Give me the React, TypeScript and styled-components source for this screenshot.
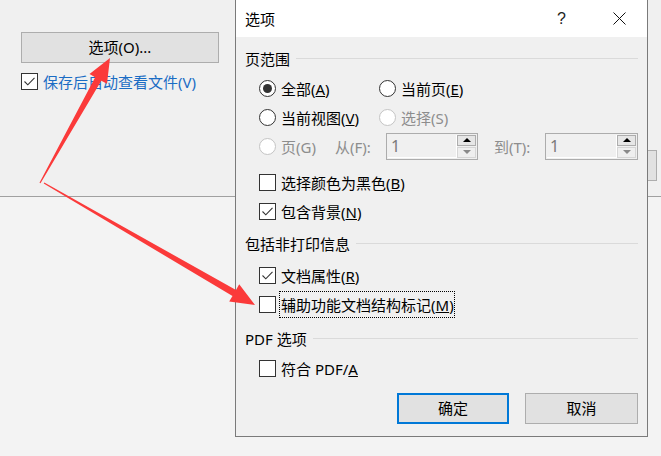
import React from "react";
import styled, { createGlobalStyle } from "styled-components";

const GlobalStyle = createGlobalStyle`
  html, body {
    margin: 0;
    padding: 0;
    background: #f0f0f0;
  }
  body {
    font-family: "Noto Sans", "Noto Sans CJK SC", sans-serif;
    font-size: 15px;
    color: #000;
  }
`;

const Page = styled.div`
  position: relative;
  width: 661px;
  height: 456px;
  overflow: hidden;
  display: flex;
  flex-direction: column;
  background: #f0f0f0;
`;

const BgTop = styled.div`
  height: 164px;
  padding: 32px 4px 0 21px;
  display: flex;
  border-bottom: 1px solid #a0a0a0;
`;

const BgColumn = styled.div`
  display: flex;
  flex-direction: column;
  gap: 10px;
`;

const BgBottom = styled.div`
  flex: 1;
  background: #f3f3f3;
`;

const WinButton = styled.button<{ $w: number; $primary?: boolean }>`
  box-sizing: border-box;
  width: ${({ $w }) => $w}px;
  height: 31px;
  background: #e1e1e1;
  border: ${({ $primary }) => ($primary ? "2px solid #0078d7" : "1px solid #adadad")};
  font-family: inherit;
  font-size: 15px;
  color: #000;
  padding: 0;
  line-height: 1;
`;

const Stub = styled.div`
  margin-left: auto;
  margin-top: 118px;
  width: 17px;
  height: 31px;
  box-sizing: border-box;
  background: #e1e1e1;
  border: 1px solid #adadad;
`;

const LinkCheck = styled.label`
  display: flex;
  align-items: center;
  gap: 5px;
  color: #1a6cc4;
  height: 17px;
`;

const Dialog = styled.div`
  position: absolute;
  left: 235px;
  top: 0;
  width: 413px;
  height: 437px;
  box-sizing: border-box;
  border: 1px solid #7a7a7a;
  border-top: none;
  background: #f0f0f0;
  display: flex;
  flex-direction: column;
`;

const TitleBar = styled.div`
  height: 37px;
  background: #fff;
  display: flex;
  align-items: center;
  padding: 0 21px 0 9px;
`;

const Title = styled.span`
  flex: 1;
  font-size: 15px;
`;

const Help = styled.span`
  font-family: "Liberation Sans", sans-serif;
  font-size: 16px;
  margin-right: 47px;
  color: #222;
`;

const Body = styled.div`
  padding: 11px 9px 12px 9px;
  display: flex;
  flex-direction: column;
  flex: 1;
`;

const SectionHead = styled.div<{ $mt?: number }>`
  display: flex;
  align-items: center;
  height: 20px;
  gap: 6px;
  margin-top: ${({ $mt }) => $mt ?? 0}px;
  &::after {
    content: "";
    flex: 1;
    height: 1px;
    background: #dadada;
  }
`;

const Group = styled.div<{ $mt: number }>`
  display: flex;
  flex-direction: column;
  gap: 5px;
  margin-top: ${({ $mt }) => $mt}px;
  padding-left: 14px;
`;

const Row = styled.div`
  display: flex;
  align-items: center;
  height: 24px;
`;

const Opt = styled.label<{ $w?: number; $disabled?: boolean }>`
  display: flex;
  align-items: center;
  gap: 5px;
  width: ${({ $w }) => ($w ? `${$w}px` : "auto")};
  color: ${({ $disabled }) => ($disabled ? "#8d8d8d" : "#000")};
  white-space: nowrap;
`;

const Radio = styled.span<{ $checked?: boolean; $disabled?: boolean }>`
  box-sizing: border-box;
  width: 17px;
  height: 17px;
  border-radius: 50%;
  border: 1px solid ${({ $disabled }) => ($disabled ? "#c4c4c4" : "#333")};
  background: #fff;
  display: flex;
  align-items: center;
  justify-content: center;
  flex-shrink: 0;
  &::after {
    content: "";
    width: 9px;
    height: 9px;
    border-radius: 50%;
    background: #333;
    display: ${({ $checked }) => ($checked ? "block" : "none")};
  }
`;

const Box = styled.span`
  box-sizing: border-box;
  width: 17px;
  height: 17px;
  border: 1px solid #333;
  background: #fff;
  display: flex;
  align-items: center;
  justify-content: center;
  flex-shrink: 0;
`;

const Focus = styled.span`
  outline: 1px dotted #000;
  outline-offset: 0;
  padding: 2px 0 2px 1px;
  margin-left: -1px;
`;

const SpinLabel = styled.span`
  color: #8d8d8d;
  margin-left: 20px;
  width: 51px;
`;

const Spin = styled.div<{ $w: number }>`
  box-sizing: border-box;
  width: ${({ $w }) => $w}px;
  height: 27px;
  border: 1px solid #acacac;
  background: #f0f0f0;
  display: flex;
  align-items: stretch;
  padding: 1px;
`;

const SpinValue = styled.span`
  flex: 1;
  color: #7a7a7a;
  font-size: 16px;
  padding-left: 3px;
  display: flex;
  align-items: center;
  border-right: 1px solid #fff;
  border-bottom: 1px solid #fff;
`;

const SpinButtons = styled.div`
  display: flex;
  flex-direction: column;
  width: 19px;
  gap: 1px;
`;

const SpinBtn = styled.span<{ $up?: boolean }>`
  flex: 1;
  box-sizing: border-box;
  border: 1px solid ${({ $up }) => ($up ? "#adadad" : "#d6d6d6")};
  background: ${({ $up }) => ($up ? "#e6e6e6" : "#efefef")};
  display: flex;
  align-items: center;
  justify-content: center;
  &::after {
    content: "";
    border-left: 4px solid transparent;
    border-right: 4px solid transparent;
    ${({ $up }) =>
      $up ? "border-bottom: 4px solid #000;" : "border-top: 4px solid #8a8a8a;"}
  }
`;

const Buttons = styled.div`
  display: flex;
  justify-content: flex-end;
  gap: 16px;
  margin-top: 13px;
`;

const Overlay = styled.svg`
  position: absolute;
  left: 0;
  top: 0;
  pointer-events: none;
`;

const Check = () => (
  <svg width="13" height="13" viewBox="0 0 13 13">
    <path d="M1.5 6.5 L4.8 9.8 L11.5 2.8" fill="none" stroke="#333" strokeWidth="1.1" />
  </svg>
);

const CheckBox = ({ checked }: { checked?: boolean }) => <Box>{checked && <Check />}</Box>;

const arrowPoints = (tx: number, ty: number, px: number, py: number) => {
  const dx = px - tx;
  const dy = py - ty;
  const len = Math.hypot(dx, dy);
  const ux = dx / len;
  const uy = dy / len;
  const nx = -uy;
  const ny = ux;
  const headLen = 24;
  const headHalf = 10;
  const w0 = 0.6;
  const w1 = 3.5;
  const bx = px - ux * headLen;
  const by = py - uy * headLen;
  const pts = [
    [tx + nx * w0, ty + ny * w0],
    [bx + nx * w1, by + ny * w1],
    [bx + nx * headHalf, by + ny * headHalf],
    [px, py],
    [bx - nx * headHalf, by - ny * headHalf],
    [bx - nx * w1, by - ny * w1],
    [tx - nx * w0, ty - ny * w0],
  ];
  return pts.map((p) => p.map((v) => v.toFixed(1)).join(",")).join(" ");
};

const Close = () => (
  <svg width="13" height="13" viewBox="0 0 13 13">
    <path d="M0.5 0.5 L12.5 12.5 M12.5 0.5 L0.5 12.5" stroke="#111" strokeWidth="1" />
  </svg>
);

export default function App() {
  return (
    <>
      <GlobalStyle />
      <Page>
        <BgTop>
          <BgColumn>
            <WinButton $w={198}>选项(O)...</WinButton>
            <LinkCheck>
              <CheckBox checked />
              保存后自动查看文件(V)
            </LinkCheck>
          </BgColumn>
          <Stub />
        </BgTop>
        <BgBottom />

        <Dialog>
          <TitleBar>
            <Title>选项</Title>
            <Help>?</Help>
            <Close />
          </TitleBar>
          <Body>
            <SectionHead>页范围</SectionHead>
            <Group $mt={8}>
              <Row>
                <Opt $w={120}>
                  <Radio $checked />
                  <span>全部(<u>A</u>)</span>
                </Opt>
                <Opt>
                  <Radio />
                  <span>当前页(<u>E</u>)</span>
                </Opt>
              </Row>
              <Row>
                <Opt $w={120}>
                  <Radio />
                  <span>当前视图(<u>V</u>)</span>
                </Opt>
                <Opt $disabled>
                  <Radio $disabled />
                  <span>选择(S)</span>
                </Opt>
              </Row>
              <Row>
                <Opt $disabled $w={56}>
                  <Radio $disabled />
                  <span>页(G)</span>
                </Opt>
                <SpinLabel>从(F):</SpinLabel>
                <Spin $w={92}>
                  <SpinValue>1</SpinValue>
                  <SpinButtons>
                    <SpinBtn $up />
                    <SpinBtn />
                  </SpinButtons>
                </Spin>
                <SpinLabel style={{ marginLeft: 16 }}>到(T):</SpinLabel>
                <Spin $w={93}>
                  <SpinValue>1</SpinValue>
                  <SpinButtons>
                    <SpinBtn $up />
                    <SpinBtn />
                  </SpinButtons>
                </Spin>
              </Row>
            </Group>
            <Group $mt={12}>
              <Row>
                <Opt>
                  <CheckBox />
                  <span>选择颜色为黑色(<u>B</u>)</span>
                </Opt>
              </Row>
              <Row>
                <Opt>
                  <CheckBox checked />
                  <span>包含背景(<u>N</u>)</span>
                </Opt>
              </Row>
            </Group>

            <SectionHead $mt={10}>包括非打印信息</SectionHead>
            <Group $mt={10}>
              <Row>
                <Opt>
                  <CheckBox checked />
                  <span>文档属性(<u>R</u>)</span>
                </Opt>
              </Row>
              <Row>
                <Opt>
                  <CheckBox />
                  <Focus>辅助功能文档结构标记(<u>M</u>)</Focus>
                </Opt>
              </Row>
            </Group>

            <SectionHead $mt={12}>PDF 选项</SectionHead>
            <Group $mt={8}>
              <Row>
                <Opt>
                  <CheckBox />
                  <span>符合 PDF/<u>A</u></span>
                </Opt>
              </Row>
            </Group>

            <Buttons>
              <WinButton $w={112} $primary>确定</WinButton>
              <WinButton $w={113}>取消</WinButton>
            </Buttons>
          </Body>
        </Dialog>

        <Overlay width="661" height="456" viewBox="0 0 661 456">
          <polygon points={arrowPoints(40, 183, 110, 58)} fill="#fb3a3a" />
          <polygon points={arrowPoints(44, 183, 255, 305)} fill="#fb3a3a" />
        </Overlay>
      </Page>
    </>
  );
}
